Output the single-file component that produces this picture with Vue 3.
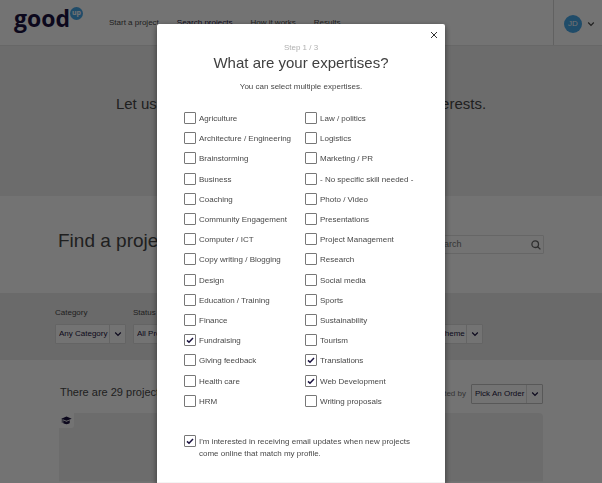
<script setup>
import { ref } from 'vue'

const left = ['Agriculture', 'Architecture / Engineering', 'Brainstorming', 'Business', 'Coaching', 'Community Engagement', 'Computer / ICT', 'Copy writing / Blogging', 'Design', 'Education / Training', 'Finance', 'Fundraising', 'Giving feedback', 'Health care', 'HRM']
const right = ['Law / politics', 'Logistics', 'Marketing / PR', '- No specific skill needed -', 'Photo / Video', 'Presentations', 'Project Management', 'Research', 'Social media', 'Sports', 'Sustainability', 'Tourism', 'Translations', 'Web Development', 'Writing proposals']
const columns = [left, right]
const picked = ref(['Fundraising', 'Translations', 'Web Development'])
const updates = ref(true)
const filters = [
  { id: 'category', label: 'Category', value: 'Any Category' },
  { id: 'status', label: 'Status', value: 'All Projects', grow: true },
  { id: 'location', label: 'Location', value: 'Any Location', grow: true },
  { id: 'theme', label: 'Theme', value: 'Any Theme' },
]
</script>

<template>
  <div class="page">
    <header class="topbar">
      <a href="#" class="logo"><span class="word">good</span><span class="up">up</span></a>
      <nav class="nav">
        <a href="#">Start a project</a>
        <a href="#" class="active">Search projects</a>
        <a href="#">How it works</a>
        <a href="#">Results</a>
      </nav>
      <button type="button" class="account">
        <span class="avatar">JD</span>
        <svg class="chev" viewBox="0 0 8 8"><path d="M1.2 2.5 4 5.3 6.8 2.5" /></svg>
      </button>
    </header>

    <section class="hero"><p>Let us match you with the projects that fit your interests.</p></section>

    <section class="find">
      <h1>Find a project</h1>
      <div class="search">
        <input type="text" placeholder="Search" aria-label="Search" />
        <svg viewBox="0 0 10 10"><circle cx="4.2" cy="4.2" r="3.3" /><path d="M6.7 6.7 9.4 9.4" /></svg>
      </div>
    </section>

    <section class="filters">
      <div v-for="f in filters" :key="f.id" class="filter" :class="{ grow: f.grow }">
        <label :for="f.id">{{ f.label }}</label>
        <div class="picker">
          <select :id="f.id"><option>{{ f.value }}</option></select>
          <svg class="chev" viewBox="0 0 8 8"><path d="M1.2 2.5 4 5.3 6.8 2.5" /></svg>
        </div>
      </div>
    </section>

    <section class="results">
      <div class="summary">
        <h2>There are 29 projects</h2>
        <label for="order">Sorted by</label>
        <div class="picker strong">
          <select id="order"><option>Pick An Order</option></select>
          <svg class="chev" viewBox="0 0 8 8"><path d="M1.2 2.5 4 5.3 6.8 2.5" /></svg>
        </div>
      </div>
      <article class="card">
        <span class="badge">
          <svg viewBox="0 0 12 10"><path d="M6 .6 11.8 3 6 5.4.2 3Z" /><path d="M2.4 4.8 6 6.3l3.6-1.5v3C8.6 9.5 3.4 9.5 2.4 7.8Z" /><path d="M.8 3.3h.8v4.2H.8Z" /></svg>
        </span>
      </article>
    </section>
  </div>

  <div class="overlay">
    <form class="modal" role="dialog" aria-labelledby="title" @submit.prevent>
      <button type="button" class="close" aria-label="Close">
        <svg viewBox="0 0 8 8"><path d="M1 1 7 7M7 1 1 7" /></svg>
      </button>
      <p class="step">Step 1 / 3</p>
      <h2 id="title">What are your expertises?</h2>
      <p class="hint">You can select multiple expertises.</p>
      <div class="choices">
        <div v-for="(col, i) in columns" :key="i" class="col">
          <label v-for="name in col" :key="name" class="check">
            <input v-model="picked" type="checkbox" :value="name" />
            <svg viewBox="0 0 12 12"><path d="M3 6.4 5 8.3 9 4" /></svg>
            <span>{{ name }}</span>
          </label>
        </div>
      </div>
      <label class="check consent">
        <input v-model="updates" type="checkbox" />
        <svg viewBox="0 0 12 12"><path d="M3 6.4 5 8.3 9 4" /></svg>
        <span>I'm interested in receiving email updates when new projects come online that match my profile.</span>
      </label>
      <footer class="foot"></footer>
    </form>
  </div>
</template>

<style>
body { overflow: hidden; background: #fff; }
</style>

<style scoped>
.page, .overlay { font-family: "Liberation Sans", Arial, sans-serif; font-size: 8px; line-height: 12px; color: #484848; }
.page *, .overlay, .overlay * { box-sizing: border-box; }
h1, h2, p { margin: 0; font-weight: 400; }
a { color: inherit; text-decoration: none; }
button, input, select { font: inherit; color: inherit; margin: 0; }
svg { display: block; fill: none; stroke: currentColor; }

.topbar { display: flex; align-items: stretch; height: 46px; border-bottom: 1px solid #e4e4e4; }
.logo { display: flex; width: 109px; padding: 4px 0 0 14px; color: #1b1340; }
.word { font: 700 23px/28px "Open Sans", "Noto Sans", sans-serif; }
.up { width: 13px; height: 13px; margin-top: 3px; border-radius: 50%; background: #48a8e8; color: #fff; font: 700 7px/12px "Open Sans", sans-serif; text-align: center; }
.nav { display: flex; flex: 1; align-items: center; gap: 18px; padding-top: 1px; }
.active { color: #1b1340; }
.account { display: flex; align-items: center; gap: 5px; width: 49px; padding: 2px 0 0 10px; border: 0; border-left: 1px solid #d8d8d8; background: none; }
.avatar { width: 18px; height: 18px; border-radius: 50%; background: #48a8e8; color: #fff; line-height: 18px; text-align: center; }
.chev { width: 8px; height: 8px; stroke-width: 1.2; }

.hero { display: flex; justify-content: center; height: 150px; padding-top: 48px; background: #f0f0f0; font-size: 15px; line-height: 20px; white-space: nowrap; }
.find { display: flex; align-items: center; justify-content: space-between; height: 97px; padding: 0 58px; }
.find h1 { font-size: 19px; line-height: 24px; margin-bottom: 8px; }
.search { position: relative; width: 118px; }
.search input { display: block; width: 100%; height: 19px; padding: 0 20px 2px 6px; border: 1px solid #e2e2e2; border-radius: 1px; background: none; font-size: 9px; }
.search input::placeholder { color: #777; opacity: 1; }
.search svg { position: absolute; right: 3px; top: 5px; width: 10px; height: 10px; stroke: #666; stroke-width: 1.3; }

.filters { display: flex; gap: 7px; height: 67px; padding: 14px 119px 0 55px; background: #ebebeb; }
.filter { display: flex; flex-direction: column; gap: 5px; }
.grow { flex: 1; }
.picker { position: relative; color: #1b1340; background: #fff; border: 1px solid #ddd; border-radius: 1px; }
.picker select { display: block; width: 100%; height: 18px; padding: 0 17px 0 3px; border: 0; background: linear-gradient(#ddd, #ddd) right 15px top / 1px 100% no-repeat; appearance: none; }
.picker .chev { position: absolute; right: 3px; top: 5px; pointer-events: none; }
.strong { border-color: #c4c4c4; }

.results { padding: 24px 59px 0; }
.summary { display: flex; align-items: center; gap: 5px; height: 20px; }
.summary h2 { flex: 1; font-size: 11px; line-height: 16px; padding-left: 1px; margin-bottom: 4px; }
.summary label { color: #777; }
.card { height: 69px; margin-top: 9px; background: #f0f0f0; border-radius: 4px 4px 0 0; border-bottom: 1px solid #f8f8f8; }
.badge { display: block; width: 15px; height: 15px; padding: 3px 2px; background: #fff; border-radius: 0 0 3px 0; }
.badge svg { width: 11px; height: 9px; fill: #1b1340; stroke: none; }

.overlay { position: fixed; inset: 0; display: flex; justify-content: center; align-items: flex-start; padding: 24px 16px 0; overflow: hidden; background: rgba(0, 0, 0, .55); }
.modal { position: relative; width: 100%; max-width: 288px; padding-top: 18px; background: #fff; border-radius: 2px; box-shadow: 0 2px 6px rgba(0, 0, 0, .5); text-align: center; }
.close { position: absolute; top: 7px; right: 7px; width: 8px; height: 8px; padding: 0; border: 0; background: none; color: #333; }
.close svg { width: 8px; height: 8px; stroke-width: 1; }
.step { color: #b0b0b0; }
.modal h2 { font-size: 15px; line-height: 18px; color: #404040; }
.hint { margin-top: 9px; }
.choices { display: grid; grid-template-columns: 1fr 1fr; gap: 8px; margin: 19px 27px 0; }
.col { display: flex; flex-direction: column; justify-content: space-between; height: 296px; }
.check { position: relative; display: flex; gap: 3px; text-align: left; }
.col .check { white-space: nowrap; }
.check span { padding-top: 1px; }
.check input { flex: none; width: 12px; height: 12px; appearance: none; border: 1px solid #777; border-radius: 1px; background: #fff; }
.check svg { position: absolute; left: 0; top: 0; width: 12px; height: 12px; stroke: #1b1340; stroke-width: 1.5; visibility: hidden; }
.check input:checked + svg { visibility: visible; }
.consent { margin: 27px 27px 22px; }
.foot { height: 40px; background: #f4f4f4; }
</style>
